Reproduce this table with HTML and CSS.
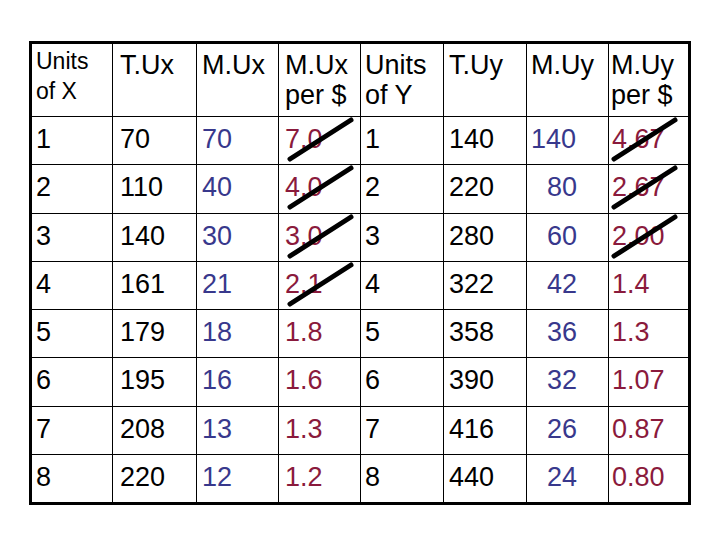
FILE: index.html
```html
<!DOCTYPE html>
<html>
<head>
<meta charset="utf-8">
<link rel="stylesheet" href="styles.css">
</head>
<body>
<div class="table">
  <div class="cell head c1 small">Units<br>of X</div>
  <div class="cell head c2">T.Ux</div>
  <div class="cell head c3">M.Ux</div>
  <div class="cell head c4">M.Ux<br>per $</div>
  <div class="cell head c5">Units<br>of Y</div>
  <div class="cell head c6">T.Uy</div>
  <div class="cell head c7">M.Uy</div>
  <div class="cell head c8">M.Uy<br>per $</div>

  <div class="cell c1">1</div><div class="cell c2">70</div><div class="cell c3 blue">70</div>
  <div class="cell c4 red struck">7.0<svg class="strike" viewBox="0 0 65 43"><line x1="2" y1="41" x2="63" y2="2"/></svg></div>
  <div class="cell c5">1</div><div class="cell c6">140</div><div class="cell c7 blue">140</div>
  <div class="cell c8 red struck">4.67<svg class="strike" viewBox="0 0 65 43"><line x1="2" y1="41" x2="63" y2="2"/></svg></div>

  <div class="cell c1">2</div><div class="cell c2">110</div><div class="cell c3 blue">40</div>
  <div class="cell c4 red struck">4.0<svg class="strike" viewBox="0 0 65 43"><line x1="2" y1="41" x2="63" y2="2"/></svg></div>
  <div class="cell c5">2</div><div class="cell c6">220</div><div class="cell c7 blue ind">80</div>
  <div class="cell c8 red struck">2.67<svg class="strike" viewBox="0 0 65 43"><line x1="2" y1="41" x2="63" y2="2"/></svg></div>

  <div class="cell c1">3</div><div class="cell c2">140</div><div class="cell c3 blue">30</div>
  <div class="cell c4 red struck">3.0<svg class="strike" viewBox="0 0 65 43"><line x1="2" y1="41" x2="63" y2="2"/></svg></div>
  <div class="cell c5">3</div><div class="cell c6">280</div><div class="cell c7 blue ind">60</div>
  <div class="cell c8 red struck">2.00<svg class="strike" viewBox="0 0 65 43"><line x1="2" y1="41" x2="63" y2="2"/></svg></div>

  <div class="cell c1">4</div><div class="cell c2">161</div><div class="cell c3 blue">21</div>
  <div class="cell c4 red struck">2.1<svg class="strike" viewBox="0 0 65 43"><line x1="2" y1="41" x2="63" y2="2"/></svg></div>
  <div class="cell c5">4</div><div class="cell c6">322</div><div class="cell c7 blue ind">42</div>
  <div class="cell c8 red">1.4</div>

  <div class="cell c1">5</div><div class="cell c2">179</div><div class="cell c3 blue">18</div>
  <div class="cell c4 red">1.8</div>
  <div class="cell c5">5</div><div class="cell c6">358</div><div class="cell c7 blue ind">36</div>
  <div class="cell c8 red">1.3</div>

  <div class="cell c1">6</div><div class="cell c2">195</div><div class="cell c3 blue">16</div>
  <div class="cell c4 red">1.6</div>
  <div class="cell c5">6</div><div class="cell c6">390</div><div class="cell c7 blue ind">32</div>
  <div class="cell c8 red">1.07</div>

  <div class="cell c1">7</div><div class="cell c2">208</div><div class="cell c3 blue">13</div>
  <div class="cell c4 red">1.3</div>
  <div class="cell c5">7</div><div class="cell c6">416</div><div class="cell c7 blue ind">26</div>
  <div class="cell c8 red">0.87</div>

  <div class="cell c1">8</div><div class="cell c2">220</div><div class="cell c3 blue">12</div>
  <div class="cell c4 red">1.2</div>
  <div class="cell c5">8</div><div class="cell c6">440</div><div class="cell c7 blue ind">24</div>
  <div class="cell c8 red">0.80</div>
</div>
</body>
</html>
```
FILE: styles.css
```css
html, body {
  margin: 0;
  padding: 0;
  background: #ffffff;
}

body {
  width: 720px;
  height: 540px;
  overflow: hidden;
  font-family: "Liberation Sans", Arial, sans-serif;
  color: #000000;
}

.table {
  display: grid;
  grid-template-columns: 80px 83px 81px 81px 82px 82px 81px 79px;
  grid-template-rows: 72px repeat(8, 47.25px);
  gap: 1px;
  background: #000000;
  border: 3px solid #000000;
  width: max-content;
  margin: 41px 0 0 29px;
}

.cell {
  background: #ffffff;
  font-size: 27px;
  line-height: 30px;
  padding-top: 7px;
  white-space: nowrap;
  position: relative;
}

.head {
  padding-top: 5.5px;
}

.small {
  font-size: 23px;
  padding-top: 2px;
}

.c1 { padding-left: 4px; }
.c2 { padding-left: 7px; }
.c3 { padding-left: 5px; }
.c4 { padding-left: 6px; }
.c5 { padding-left: 4px; }
.c6 { padding-left: 5px; }
.c7 { padding-left: 4px; }
.c8 { padding-left: 3px; }
.head.c8 { padding-left: 2px; }
.c7.ind { padding-left: 20px; }

.blue { color: #38388c; }
.red { color: #8a1a3c; }

.strike {
  position: absolute;
  top: 1px;
  width: 65px;
  height: 43px;
  overflow: visible;
}

.c4 .strike { left: 9px; }
.c8 .strike { left: 3px; }

.strike line {
  stroke: #000000;
  stroke-width: 5;
  stroke-linecap: round;
}
```
